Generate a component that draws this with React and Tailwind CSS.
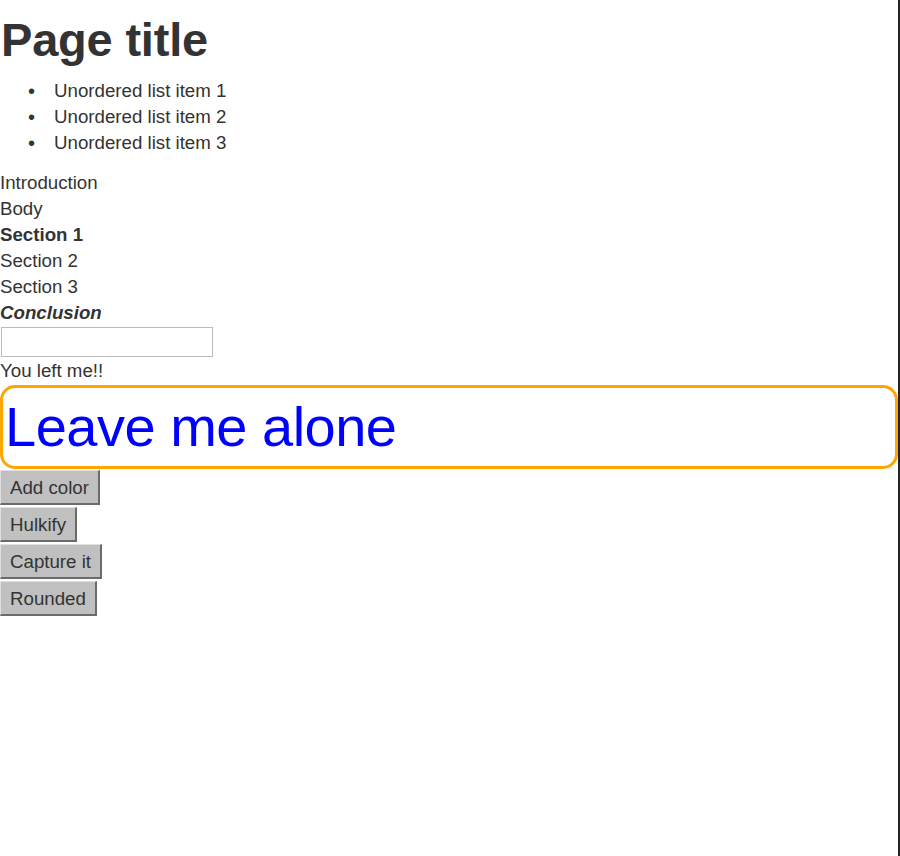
export default function App() {
  const font = { fontFamily: '"Liberation Sans", Arial, sans-serif' };
  const btn =
    "block bg-[#c0c0c0] text-[#333] text-[18.7px] leading-[21px] px-[9px] pt-[6px] pb-[5px] border-t border-l border-t-[#e0e0e0] border-l-[#e0e0e0] border-r-2 border-b-2 border-r-[#6b6b6b] border-b-[#6b6b6b] mb-[2px]";
  const items = ["Unordered list item 1", "Unordered list item 2", "Unordered list item 3"];
  return (
    <div
      className="w-[900px] h-[856px] bg-white border-r-2 border-r-[#222] text-[#333] text-[18.7px] leading-[26px] overflow-hidden"
      style={font}
    >
      <h1 className="text-[47px] font-bold leading-[55px] pt-[12px] pl-[1px] tracking-[-0.2px]">
        Page title
      </h1>
      <ul className="mt-[11px]">
        {items.map((t) => (
          <li key={t} className="flex">
            <span className="w-[54px] pl-[28px] text-[20px]">•</span>
            <span>{t}</span>
          </li>
        ))}
      </ul>
      <div className="mt-[14px]">
        <div>Introduction</div>
        <div>Body</div>
        <div className="font-bold">Section 1</div>
        <div>Section 2</div>
        <div>Section 3</div>
        <div className="font-bold italic">Conclusion</div>
      </div>
      <input
        type="text"
        className="block mt-px ml-px w-[212px] h-[30px] border border-[#bbb] bg-white outline-none"
      />
      <div className="mt-px">You left me!!</div>
      <div className="mt-px w-[898px] h-[84px] border-[3px] border-[#ffa500] rounded-[15px] pl-[2px] flex items-center">
        <span className="text-[#0000ff] text-[56px] leading-[64px] tracking-[-0.5px]">
          Leave me alone
        </span>
      </div>
      <div className="mt-px flex flex-col items-start">
        <button className={btn}>Add color</button>
        <button className={btn}>Hulkify</button>
        <button className={btn}>Capture it</button>
        <button className={btn}>Rounded</button>
      </div>
    </div>
  );
}
